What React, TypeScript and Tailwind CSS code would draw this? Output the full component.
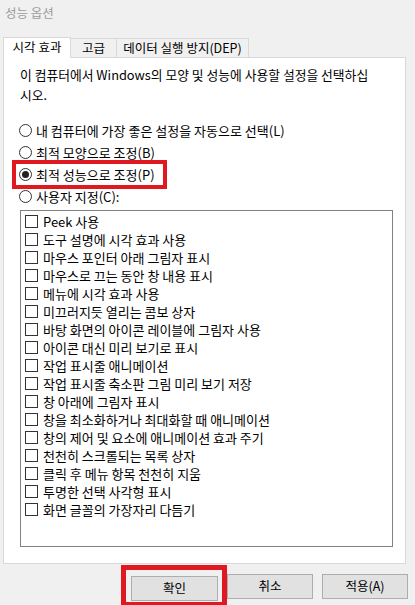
const font = { fontFamily: '"Noto Sans CJK KR", "Noto Sans", sans-serif' };

const options = [
  "Peek 사용",
  "도구 설명에 시각 효과 사용",
  "마우스 포인터 아래 그림자 표시",
  "마우스로 끄는 동안 창 내용 표시",
  "메뉴에 시각 효과 사용",
  "미끄러지듯 열리는 콤보 상자",
  "바탕 화면의 아이콘 레이블에 그림자 사용",
  "아이콘 대신 미리 보기로 표시",
  "작업 표시줄 애니메이션",
  "작업 표시줄 축소판 그림 미리 보기 저장",
  "창 아래에 그림자 표시",
  "창을 최소화하거나 최대화할 때 애니메이션",
  "창의 제어 및 요소에 애니메이션 효과 주기",
  "천천히 스크롤되는 목록 상자",
  "클릭 후 메뉴 항목 천천히 지움",
  "투명한 선택 사각형 표시",
  "화면 글꼴의 가장자리 다듬기",
];

function Radio({ label, checked }: { label: string; checked?: boolean }) {
  return (
    <div className="flex items-center h-[22px] gap-[4px]">
      <span className="w-[13px] h-[13px] rounded-full border border-[#333] bg-white flex items-center justify-center">
        {checked && <span className="w-[7px] h-[7px] rounded-full bg-[#222]" />}
      </span>
      <span className="text-[13px] leading-none text-black">{label}</span>
    </div>
  );
}

export default function App() {
  return (
    <div
      className="w-[415px] h-[605px] bg-[#f0f0f0] overflow-hidden text-black"
      style={font}
    >
      <div className="h-[26px] flex items-center pl-[5px] text-[12.5px] text-[#9c9c9c]">
        성능 옵션
      </div>

      {/* tabs */}
      <div className="mt-[11px] pl-[3px] h-[20px] flex items-end relative z-10">
        <div className="w-[68px] h-[21px] -mb-px bg-white border border-b-0 border-[#d9d9d9] flex items-center justify-center text-[12.5px] pb-[1px]">
          시각 효과
        </div>
        <div className="w-[46px] h-[19px] border-t border-r border-[#d9d9d9] flex items-center justify-center text-[12.5px]">
          고급
        </div>
        <div className="w-[132px] h-[19px] border-t border-r border-[#d9d9d9] flex items-center justify-center text-[12.5px]">
          데이터 실행 방지(DEP)
        </div>
      </div>

      {/* panel */}
      <div className="ml-[3px] w-[403px] h-[507px] bg-white border border-[#d9d9d9]">
        <p className="pt-[7px] px-[16px] text-[12.8px] leading-[20px] whitespace-nowrap">
          이 컴퓨터에서 Windows의 모양 및 성능에 사용할 설정을 선택하십
          <br />
          시오.
        </p>

        <div className="mt-[14px] pl-[15px]">
          <Radio label="내 컴퓨터에 가장 좋은 설정을 자동으로 선택(L)" />
          <Radio label="최적 모양으로 조정(B)" />
          <div className="relative">
            <Radio label="최적 성능으로 조정(P)" checked />
            <div className="absolute left-[-7px] top-[-3px] w-[155px] h-[29px] border-[4px] border-[#e0181f]" />
          </div>
          <Radio label="사용자 지정(C):" />
        </div>

        <div className="mt-[3px] ml-[16px] w-[373px] h-[337px] border border-[#828282] pt-[1px] pl-[4px]">
          {options.map((o) => (
            <div key={o} className="h-[18px] flex items-center gap-[5px]">
              <span className="w-[13px] h-[13px] border border-[#333] bg-white shrink-0" />
              <span className="text-[13px] leading-none">{o}</span>
            </div>
          ))}
        </div>
      </div>

      {/* buttons */}
      <div className="mt-[10px] pr-[7px] flex justify-end gap-[9px]">
        <div className="relative">
          <button className="w-[87px] h-[25px] bg-[#e1e1e1] border border-[#adadad] text-[12.5px]">
            확인
          </button>
          <div className="absolute left-[-10px] top-[-9px] w-[106px] h-[42px] border-[5px] border-[#e0181f]" />
        </div>
        <button className="w-[86px] h-[25px] bg-[#e1e1e1] border border-[#adadad] text-[12.5px]">
          취소
        </button>
        <button className="w-[86px] h-[25px] bg-[#e1e1e1] border border-[#adadad] text-[12.5px]">
          적용(A)
        </button>
      </div>
    </div>
  );
}
